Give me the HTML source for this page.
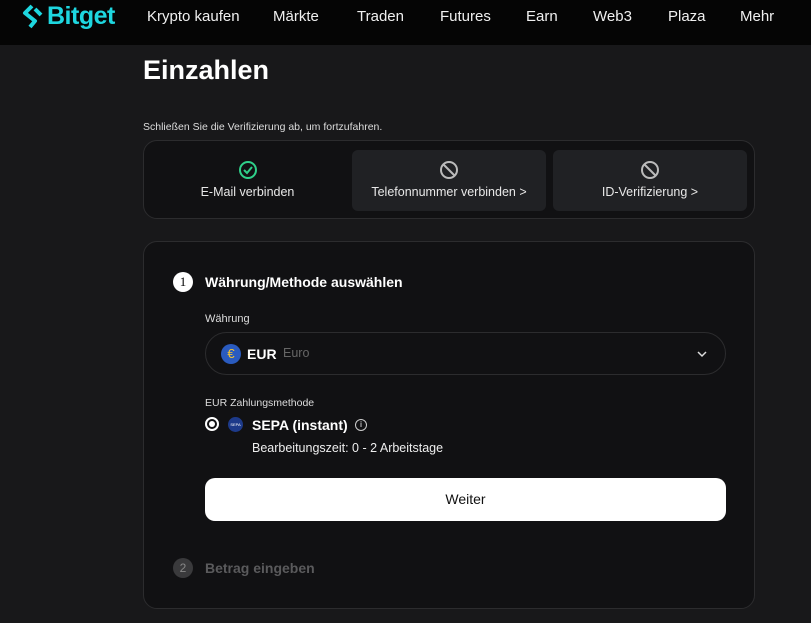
<!DOCTYPE html>
<html><head><meta charset="utf-8"><style>
*{margin:0;padding:0;box-sizing:border-box}
body{width:811px;height:623px;overflow:hidden;background:#18181a;font-family:"Liberation Sans",sans-serif;color:#fff;position:relative}
.hdr{position:absolute;left:0;top:0;width:811px;height:45px;background:#050505}
.nav{position:absolute;top:8px;font-size:15px;color:#f0f0f0}
.abs{position:absolute}
.card{position:absolute;border:1px solid #2c2c2e;border-radius:14px;background:#111113}
.box{position:absolute;top:9px;height:61px;border-radius:6px;background:#202124;text-align:center;font-size:12.5px;color:#e8e8e8}
.box svg{position:absolute;left:50%;margin-left:-10px;top:10px}
.box span{position:absolute;left:0;right:0;top:35px}
</style></head><body>
<div class="hdr">
<svg class="abs" style="left:22px;top:3px" width="22" height="28" viewBox="0 0 22 28"><path d="M10 3 L3 10 L13 18 L8 24" fill="none" stroke="#1ed7e0" stroke-width="4" stroke-linejoin="round"/><path d="M13 6 L19 12" stroke="#1ed7e0" stroke-width="4"/></svg>
<div class="abs" style="left:47px;top:2px;font-size:25px;font-weight:bold;color:#1ed7e0;letter-spacing:-0.5px">Bitget</div>
<div class="nav" style="left:147px">Krypto kaufen</div>
<div class="nav" style="left:273px">Märkte</div>
<div class="nav" style="left:357px">Traden</div>
<div class="nav" style="left:440px">Futures</div>
<div class="nav" style="left:526px">Earn</div>
<div class="nav" style="left:593px">Web3</div>
<div class="nav" style="left:668px">Plaza</div>
<div class="nav" style="left:740px">Mehr</div>
</div>
<div class="abs" style="left:143px;top:55px;font-size:27px;font-weight:bold">Einzahlen</div>
<div class="abs" style="left:143px;top:121px;font-size:10.5px;color:#ddd">Schließen Sie die Verifizierung ab, um fortzufahren.</div>
<div class="card" style="left:143px;top:140px;width:612px;height:79px">
<div class="box" style="left:7px;width:193px;background:transparent"><svg width="20" height="20" viewBox="0 0 20 20"><circle cx="10" cy="10" r="8" fill="none" stroke="#2fd08a" stroke-width="2"/><path d="M6 10l3 3 5-6" fill="none" stroke="#2fd08a" stroke-width="2"/></svg><span>E-Mail verbinden</span></div>
<div class="box" style="left:208px;width:194px"><svg width="20" height="20" viewBox="0 0 20 20"><circle cx="10" cy="10" r="8" fill="none" stroke="#bbb" stroke-width="2"/><path d="M4.5 4.5l11 11" stroke="#bbb" stroke-width="2"/></svg><span>Telefonnummer verbinden &gt;</span></div>
<div class="box" style="left:409px;width:194px"><svg width="20" height="20" viewBox="0 0 20 20"><circle cx="10" cy="10" r="8" fill="none" stroke="#bbb" stroke-width="2"/><path d="M4.5 4.5l11 11" stroke="#bbb" stroke-width="2"/></svg><span>ID-Verifizierung &gt;</span></div>
</div>
<div class="card" style="left:143px;top:241px;width:612px;height:368px">
<div class="abs" style="left:29px;top:30px;width:20px;height:20px;border-radius:50%;background:#fff;color:#000;font-family:'Liberation Serif',serif;font-size:13px;text-align:center;line-height:20px">1</div>
<div class="abs" style="left:61px;top:32px;font-size:14px;font-weight:bold">Währung/Methode auswählen</div>
<div class="abs" style="left:61px;top:71px;font-size:11px;color:#ddd">Währung</div>
<div class="abs" style="left:61px;top:90px;width:521px;height:43px;border:1px solid #2c2c2e;border-radius:22px">
<div class="abs" style="left:15px;top:11px;width:20px;height:20px;border-radius:50%;background:#2a5bbf;color:#f4c430;font-size:13px;text-align:center;line-height:20px">€</div>
<div class="abs" style="left:41px;top:13px;font-size:14px;font-weight:bold">EUR</div>
<div class="abs" style="left:77px;top:13px;font-size:12.5px;color:#666">Euro</div>
<svg class="abs" style="left:490px;top:15px" width="12" height="12" viewBox="0 0 12 12"><path d="M2 4l4 4 4-4" fill="none" stroke="#ddd" stroke-width="1.5"/></svg>
</div>
<div class="abs" style="left:61px;top:155px;font-size:10.5px;color:#ddd">EUR Zahlungsmethode</div>
<div class="abs" style="left:61px;top:175px;width:14px;height:14px;border-radius:50%;border:2px solid #fff"><div style="margin:2px;width:6px;height:6px;border-radius:50%;background:#fff"></div></div>
<div class="abs" style="left:84px;top:175px;width:15px;height:15px;border-radius:50%;background:#1d3a8a;font-size:4px;text-align:center;line-height:15px">SEPA</div>
<div class="abs" style="left:108px;top:175px;font-size:14px;font-weight:bold">SEPA (instant)</div>
<div class="abs" style="left:211px;top:177px;width:12px;height:12px;border-radius:50%;border:1px solid #ccc;font-size:8px;text-align:center;line-height:10px">i</div>
<div class="abs" style="left:108px;top:199px;font-size:12.5px;color:#eee">Bearbeitungszeit: 0 - 2 Arbeitstage</div>
<div class="abs" style="left:61px;top:236px;width:521px;height:43px;background:#fff;border-radius:10px;color:#111;text-align:center;line-height:43px;font-size:14px">Weiter</div>
<div class="abs" style="left:29px;top:316px;width:20px;height:20px;border-radius:50%;background:#3a3a3c;color:#888;font-size:12px;text-align:center;line-height:20px">2</div>
<div class="abs" style="left:61px;top:318px;font-size:14px;font-weight:bold;color:#5a5a5c">Betrag eingeben</div>
</div>
</body></html>
